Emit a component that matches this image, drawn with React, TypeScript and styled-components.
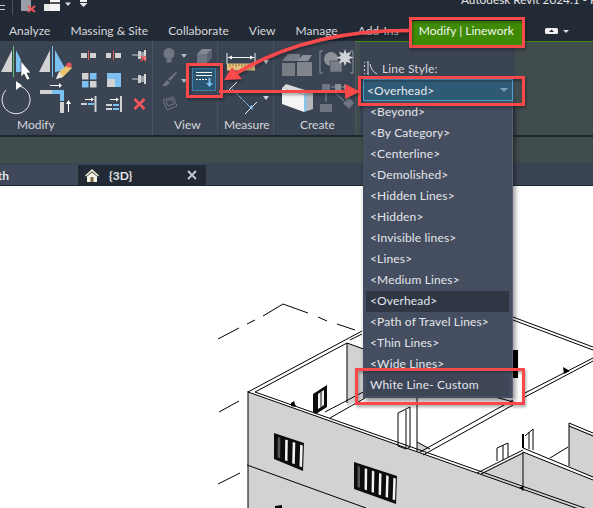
import React from 'react'
import styled, { createGlobalStyle } from 'styled-components'

const GlobalStyle = createGlobalStyle`
    html, body {
        margin: 0;
        padding: 0;
        background: #fff;
    }
    body {
        font-family: Lato, "Open Sans", "Liberation Sans", sans-serif;
    }
`

const Root = styled.div`
    position: relative;
    width: 593px;
    height: 508px;
    overflow: hidden;
    display: flex;
    flex-direction: column;
    background: #fff;
`

const TitleBar = styled.div`
    position: relative;
    height: 21px;
    flex: none;
    background: #222a35;
    overflow: hidden;
`

const Title = styled.div`
    margin: -9px 0 0 461px;
    font-size: 11.8px;
    line-height: 17px;
    color: #e4e6e9;
    white-space: nowrap;
`

const QuickAccess = styled.svg`
    position: absolute;
    left: 0;
    top: 0;
`

const TabStrip = styled.div`
    height: 20px;
    flex: none;
    display: flex;
    background: #222a35;
    position: relative;
    z-index: 2;
`

const Tab = styled.div<{ $active?: boolean }>`
    flex: none;
    font-size: 12px;
    line-height: 20px;
    padding: 0 ${p => (p.$active ? '8px' : '10px')};
    margin-left: ${p => (p.$active ? '2px' : '0')};
    height: ${p => (p.$active ? '25px' : '20px')};
    background: ${p => (p.$active ? '#3f8a05' : 'transparent')};
    color: ${p => (p.$active ? '#f2f6ee' : '#d5d8dc')};
    white-space: nowrap;
    &:first-child {
        margin-left: -1px;
    }
`

const TabIcons = styled.svg`
    margin-left: 23px;
    margin-top: 6px;
`

const Ribbon = styled.div`
    height: 94px;
    flex: none;
    display: flex;
    background: #3b4453;
    border-bottom: 2px solid #20262e;
`

const Panel = styled.div<{ $width: number; $labelLeft: number }>`
    width: ${p => p.$width}px;
    flex: none;
    box-sizing: border-box;
    border-right: 1px solid #4a5362;
    display: flex;
    flex-direction: column;
    color: #d5d8dc;
    font-size: 12px;
    line-height: 20px;
    & > span {
        padding-left: ${p => p.$labelLeft}px;
        margin-top: -1px;
    }
`

const PanelArt = styled.svg`
    display: block;
    flex: none;
`

const ContextArea = styled.div`
    flex: 1;
    display: flex;
    background: #414c4c;
    border-top: 2px solid #3f8a05;
    margin-top: -1px;
    padding-left: 4px;
`

const LineStylePanel = styled.div`
    width: 155px;
    box-sizing: border-box;
    background: #3b4453;
    padding: 18px 0 0 3px;
    display: flex;
    flex-direction: column;
`

const StyleLabel = styled.div`
    display: flex;
    align-items: center;
    gap: 4px;
    height: 16px;
    font-size: 12px;
    letter-spacing: 0.15px;
    color: #d5d8dc;
`

const DropDown = styled.div`
    position: relative;
    margin-top: 3px;
    width: 150px;
`

const Combo = styled.div`
    box-sizing: border-box;
    height: 22px;
    background: #2f5a75;
    border: 1px solid #4aa6d5;
    display: flex;
    align-items: center;
    justify-content: space-between;
    padding: 0 4px 0 3px;
    font-size: 12px;
    letter-spacing: 0.15px;
    color: #e8ebee;
`

const ComboCaret = styled.i`
    width: 0;
    height: 0;
    border-left: 4px solid transparent;
    border-right: 4px solid transparent;
    border-top: 4px solid #7f9db1;
`

const List = styled.div`
    position: absolute;
    top: 100%;
    left: 0;
    width: 100%;
    box-sizing: border-box;
    padding: 1px 3px 2px;
    background: #454e60;
    border-right: 1px solid #5a6373;
    box-shadow: 2px 3px 5px rgba(0, 0, 0, 0.45);
    z-index: 3;
`

const ListItem = styled.div<{ $selected?: boolean }>`
    height: 21px;
    line-height: 20px;
    padding-left: 4px;
    font-size: 12px;
    letter-spacing: 0.15px;
    white-space: nowrap;
    color: #e4e6ea;
    background: ${p => (p.$selected ? '#2f3745' : 'transparent')};
`

const CustomItem = styled(ListItem)`
    background: #3d4557;
    padding-left: 4px;
`

const Band = styled.div`
    height: 26px;
    flex: none;
    background: #414c4c;
`

const DocTabs = styled.div`
    height: 20px;
    padding-top: 2px;
    flex: none;
    display: flex;
    background: #3a4353;
    border-bottom: 1px solid #20262e;
`

const DocTab = styled.div<{ $active?: boolean }>`
    flex: none;
    width: ${p => (p.$active ? '128px' : '78px')};
    box-sizing: border-box;
    display: flex;
    align-items: center;
    justify-content: ${p => (p.$active ? 'flex-start' : 'flex-end')};
    gap: 9px;
    padding: ${p => (p.$active ? '0 9px 0 6px' : '0')};
    background: ${p => (p.$active ? '#222a35' : '#3f485b')};
    color: #e3e5e8;
    font-size: 12px;
    font-weight: 700;
    & > em {
        font-style: normal;
        flex: 1;
    }
`

const ThTab = styled.span`
    margin-right: 69px;
`

const Canvas = styled.div`
    flex: 1;
    background: #fff;
`

const Model = styled.svg`
    display: block;
`

const Annotations = styled.svg`
    position: absolute;
    left: 0;
    top: 0;
    z-index: 5;
    pointer-events: none;
`

const BLUE = '#7cc0f2'
const GREY = '#d2d2d2'
const DIM = '#6f7681'
const RED = '#f9484c'

// panel drawings use page coordinates through their viewBox
const Art: React.FC<{ x: number; w: number; children: React.ReactNode }> = ({ x, w, children }) => (
    <PanelArt width={w} height={75} viewBox={`${x} 41 ${w} 75`}>{children}</PanelArt>
)

const Caret: React.FC<{ x: number; y: number; fill?: string }> = ({ x, y, fill = '#d8dbe0' }) => (
    <polygon points={`${x - 3},${y - 2} ${x + 3},${y - 2} ${x},${y + 2}`} fill={fill} />
)

const Pin: React.FC<{ y: number }> = ({ y }) => (
    <g>
        <path d={`M132 ${y + 6}h6`} stroke="#c9ccd0" strokeWidth="1" />
        <rect x="138" y={y + 2} width="3" height="8" fill="#c9ccd0" />
        <rect x="141" y={y + 3} width="3" height="6" fill="#9a9ea6" />
        <rect x="144" y={y + 1} width="2" height="10" fill="#d8d8d8" />
    </g>
)

const ModifyArt = () => (
    <Art x={0} w={153}>
        <polygon points="1,72 12,50 12,72" fill={GREY} />
        <path d="M13.5 46v31" stroke="#62c47a" strokeWidth="1" />
        <polygon points="16,50 21,60 21,72 16,72" fill={BLUE} />
        <path d="M21 61v16l3-3 3 6 3-1-3-6h4z" fill="#fff" stroke="#20262e" strokeWidth="0.6" />
        <polygon points="39,72 50,50 50,72" fill={GREY} />
        <path d="M52.5 46v31" stroke={BLUE} strokeWidth="1" />
        <polygon points="55,50 66,70 55,72" fill={BLUE} />
        <path d="M56 79l3-7 9-8 4 4-9 9z" fill="#e9c46c" />
        <circle cx="69" cy="65" r="2.6" fill="#e8505a" />
        <path d="M56 79l3-7 4 5z" fill="#e8e8e8" />

        <path d="M19 86A14 14 0 1 1 6 90" fill="none" stroke="#e8e8e8" strokeWidth="1" />
        <polygon points="16,81 22,85.5 16,90" fill="#fff" />
        <rect x="40" y="90" width="12" height="4" fill={GREY} />
        <path d="M52 90h12v11h-4v-7h-8z" fill={BLUE} />
        <rect x="60" y="102" width="4" height="11" fill={GREY} />
        <path d="M50 85.5h9" stroke="#fff" strokeWidth="1" />
        <polygon points="59,83 62,85.5 59,88" fill="#fff" />
        <path d="M68.5 112v-8" stroke="#fff" strokeWidth="1" />
        <polygon points="66,104 68.5,100 71,104" fill="#fff" />

        <rect x="81" y="53" width="6" height="5" fill={GREY} />
        <rect x="90" y="53" width="6" height="5" fill={GREY} />
        <path d="M88.5 50.5v9.5" stroke="#e05a5a" strokeWidth="1" />
        <rect x="106" y="53" width="5" height="5" fill={GREY} />
        <rect x="115" y="53" width="6" height="5" fill={GREY} />
        <path d="M113.5 50.5v9.5" stroke="#e05a5a" strokeWidth="1" />
        <Pin y={49} />
        <path d="M141 56l5 5m0-5l-5 5" stroke="#f05050" strokeWidth="1.6" />

        <rect x="82" y="73" width="6.5" height="6.5" fill={GREY} />
        <rect x="90" y="73" width="6.5" height="6.5" fill={BLUE} />
        <rect x="82" y="81" width="6.5" height="6.5" fill={BLUE} />
        <rect x="90" y="81" width="6.5" height="6.5" fill={GREY} />
        <rect x="107" y="73" width="14" height="14" fill={BLUE} />
        <rect x="107" y="79" width="8" height="8" fill={GREY} />
        <Pin y={73} />

        <rect x="94.5" y="96" width="2" height="16" fill={GREY} />
        <rect x="81" y="103" width="6" height="2" fill={GREY} />
        <rect x="88" y="103" width="6" height="2" fill={BLUE} />
        <path d="M85 99.5h6" stroke="#fff" />
        <polygon points="91,97.5 94,99.5 91,101.5" fill="#fff" />
        <rect x="120" y="96" width="2" height="16" fill={GREY} />
        <rect x="106" y="104" width="6" height="2" fill={GREY} />
        <rect x="106" y="108" width="6" height="2" fill={GREY} />
        <rect x="113" y="104" width="6" height="2" fill={BLUE} />
        <rect x="113" y="108" width="6" height="2" fill={BLUE} />
        <path d="M110 99.5h6" stroke="#fff" />
        <polygon points="116,97.5 119,99.5 116,101.5" fill="#fff" />
        <path d="M134.5 99l10 10m0-10l-10 10" stroke="#f4555a" strokeWidth="2.6" />
    </Art>
)

const ViewArt = () => (
    <Art x={153} w={65}>
        <circle cx="169" cy="53.5" r="5.5" fill={DIM} />
        <rect x="166.5" y="59" width="5" height="3.5" fill={DIM} />
        <Caret x={184} y={56} fill="#aeb3ba" />
        <polygon points="197,54 207,54 207,63 197,63" fill={DIM} />
        <polygon points="197,54 202,49 212,49 207,54" fill="#858b95" />
        <polygon points="207,54 212,49 212,58 207,63" fill="#5b626d" />
        <path d="M162 86l5-6 3 3-4 3zM168 79l8-7 1 1-7 8z" fill={DIM} />
        <Caret x={184} y={81} fill="#aeb3ba" />
        <path d="M163 100l10-3 4 9-10 4zM166 101l6-2 2 5-6 2z" fill="none" stroke={DIM} strokeWidth="1" />
        <rect x="192.5" y="68.5" width="23" height="22" fill="#2b5570" stroke="#3d84ab" />
        <path d="M196 72.5h16M196 75.5h16" stroke="#f0f2f4" strokeWidth="1" />
        <path d="M196 79.5h11" stroke="#f0f2f4" strokeWidth="1" strokeDasharray="2 1" />
        <path d="M209.5 78v6" stroke={BLUE} strokeWidth="2" />
        <polygon points="206,83 213,83 209.5,87" fill={BLUE} />
    </Art>
)

const MeasureArt = () => (
    <Art x={218} w={56}>
        <path d="M227 53v11M255 53v11M228 57.5h26" stroke="#f0f2f4" strokeWidth="1" />
        <polygon points="228,57.5 232,55.5 232,59.5" fill="#f0f2f4" />
        <polygon points="254,57.5 250,55.5 250,59.5" fill="#f0f2f4" />
        <rect x="227" y="63.5" width="28" height="7" fill="#e6c27c" />
        <path d="M230 64v3M233 64v2M236 64v3M239 64v2M242 64v3M245 64v2M248 64v3M251 64v2" stroke="#8d7644" strokeWidth="1" />
        <Caret x={266} y={62} />
        <path d="M229 90l8-8M245 114l12-12" stroke="#f0f2f4" strokeWidth="1" />
        <path d="M232 89l19 19" stroke={BLUE} strokeWidth="1" strokeDasharray="4 1" />
        <polygon points="249,107 253,110 252,105" fill={BLUE} />
        <Caret x={266} y={98} />
    </Art>
)

const CreateArt = () => (
    <Art x={274} w={82}>
        <polygon points="282,63 295,63 295,76 282,76" fill="#777c85" />
        <polygon points="297,62 306,62 312,62 312,76 297,76" fill="#7f848d" />
        <polygon points="282,61 288,54 300,54 300,61" fill="#777c85" />
        <polygon points="297,61 303,55 312,55 308,61" fill="#8c919a" />
        <polygon points="286,84 311,92 304,95 282,88" fill="#d9dadc" />
        <polygon points="282,88 304,95 304,112 282,104" fill="#f4f4f4" />
        <polygon points="304,95 307,93 307,111 304,112" fill="#8ec3e8" />
        <polygon points="307,93 313,92 313,109 307,111" fill="#b4b6b9" />
        <path d="M323 51h-3v22h3M350 51h3v22h-3" fill="none" stroke="#8d929a" strokeWidth="1" />
        <circle cx="331" cy="59" r="7" fill="#8d929a" />
        <rect x="330" y="61" width="12" height="11" fill="#797e87" stroke="#4b525e" strokeWidth="0.8" />
        <path d="M345 49l1.6 4.5 4.5-2-2 4.5 4.5 1.6-4.5 1.6 2 4.5-4.5-2-1.6 4.5-1.6-4.5-4.5 2 2-4.5-4.5-1.6 4.5-1.6-2-4.5 4.5 2z" fill="#cfd2d6" />
        <rect x="322" y="84" width="8" height="7" fill={DIM} />
        <rect x="320" y="104" width="12" height="8" fill={DIM} />
        <polygon points="343,103 349,97 354,103 349,109" fill={DIM} />
        <rect x="335" y="84" width="6" height="6" fill="#8d929a" />
        <path d="M331 87h13M326 92v10M332 90l12 11" stroke="#8d929a" strokeWidth="1" />
        <polygon points="344,84 348,87 344,90" fill="#8d929a" />
    </Art>
)

const pts = (list: number[][]) => list.map(p => p.join(',')).join(' ')

// a black framed window in a wall, given its corners, with glass stripes across it
const WallWindow: React.FC<{ tl: number[]; tr: number[]; br: number[]; bl: number[]; panes: number }> = ({ tl, tr, br, bl, panes }) => {
    const at = (a: number[], b: number[], t: number) => [a[0] + (b[0] - a[0]) * t, a[1] + (b[1] - a[1]) * t]
    const stripes = []
    for (let i = 0; i < panes; i++) {
        const s = (i + 0.5) / panes
        const e = (i + 0.85) / panes
        stripes.push(
            <polygon
                key={i}
                points={pts([
                    at(at(tl, tr, s), at(bl, br, s), 0.1),
                    at(at(tl, tr, e), at(bl, br, e), 0.1),
                    at(at(tl, tr, e), at(bl, br, e), 0.88),
                    at(at(tl, tr, s), at(bl, br, s), 0.88),
                ])}
                fill={i === 0 ? '#555' : '#f2f2f2'}
            />,
        )
    }
    return (
        <g>
            <polygon points={pts([tl, tr, br, bl])} fill="#0c0c0c" />
            {stripes}
        </g>
    )
}

const Building = () => (
    <Model width={593} height={322} viewBox="0 186 593 322">
        <g fill={GREY}>
            <polygon points="248,392 593,514 248,514" />
            <polygon points="347,343 370,351 370,395 347,406" />
            <polygon points="417,442 430,449 422,453 417,451" />
            <polygon points="478,474 523,452 523,491" />
            <polygon points="523,452 593,480 593,514 523,491" />
            <polygon points="569,425 593,435 593,478 569,467" />
        </g>
        <g fill="none" stroke="#000" strokeWidth="1">
            <path d="M283 304l-20 12M255 320l-8 4M239 328l-21 11M283 304l25 9M318 317l9 4M337 324l18 6" />
            <path d="M219 412l20-11M218 484l22-11" />
            <path d="M248 392L362 331M255 392L347 343M350 340L362 334" />
            <path d="M248 391V508M248 392L593 514M255 392L593 511" />
            <path d="M347 343V403M347 343l22 8" />
            <path d="M247 465L366 508" />
            <path d="M417 397V452M417 442l13 7" />
            <path d="M325 412l40-21M330 418l35-20" />
            <path d="M420 452L513 400M423 455L513 405M525 393L593 358M525 397L593 361" />
            <path d="M513 317L593 347M513 320L593 350" />
            <path d="M495 397l22 6" />
            <path d="M477 473l46-23M481 474l42-21" />
            <path d="M523 448L593 477M523 452L593 480M523 452V491" />
            <path d="M550 458l18-11" />
            <path d="M569 423L593 433M569 426L593 436M569 423V466" />
            <path d="M497 448v13M497 448l11-5v14M503 445v15" />
            <path d="M525 436l8-7v21M529 432v17" />
            <path d="M398 413l12-6v40l-4 2-8-3zM406 410v37" />
        </g>
        <rect x="522" y="434" width="2" height="14" fill="#000" />
        <polygon points="313,394 327,385 327,407 316,414 313,412" fill="#0c0c0c" />
        <polygon points="318,394 324,390 324,405 318,409" fill="#f2f2f2" />
        <path d="M321 392v15" stroke="#111" strokeWidth="1" />
        <polygon points="291,403 294,401 296,407 291,406" fill="#000" />
        <polygon points="563,367 570,371 564,374" fill="#000" />
        <polygon points="519,488 523,486 523,490" fill="#000" />
        <rect x="513" y="350" width="5" height="28" fill="#000" />
        <polygon points="275,506 282,505 282,508 275,508" fill="#000" />
        <WallWindow tl={[274, 433]} tr={[304, 443]} br={[303, 471]} bl={[274, 459]} panes={4} />
        <WallWindow tl={[354, 462]} tr={[397, 476]} br={[396, 504]} bl={[354, 489]} panes={6} />
    </Model>
)

const Marks = () => (
    <Annotations width={593} height={508} viewBox="0 0 593 508">
        <defs>
            <filter id="soft" x="-20%" y="-20%" width="140%" height="150%">
                <feDropShadow dx="1" dy="2" stdDeviation="1.5" floodColor="#000" floodOpacity="0.35" />
            </filter>
        </defs>
        <g fill="none" stroke={RED} strokeWidth="3" filter="url(#soft)">
            <rect x="187.5" y="64.5" width="34" height="32" />
            <rect x="410.5" y="18.5" width="113" height="28" />
            <rect x="359.5" y="77.5" width="164" height="27" />
            <rect x="356.5" y="369.5" width="167" height="34" />
            <path d="M410 30.5C345 30 285 44 235 74" strokeWidth="3.5" />
            <path d="M219 91.5H346" />
        </g>
        <g fill={RED} filter="url(#soft)">
            <polygon points="224,80 232,67 242,79" />
            <polygon points="345,84 360,91.5 345,99" />
        </g>
    </Annotations>
)

const lineStyles = [
    '<Beyond>',
    '<By Category>',
    '<Centerline>',
    '<Demolished>',
    '<Hidden Lines>',
    '<Hidden>',
    '<Invisible lines>',
    '<Lines>',
    '<Medium Lines>',
    '<Overhead>',
    '<Path of Travel Lines>',
    '<Thin Lines>',
    '<Wide Lines>',
]

const tabs = ['Analyze', 'Massing & Site', 'Collaborate', 'View', 'Manage', 'Add-Ins']

const App: React.FC = () => (
    <Root>
        <GlobalStyle />
        <TitleBar>
            <Title>Autodesk Revit 2024.1 - P</Title>
            <QuickAccess width={100} height={21} viewBox="0 0 100 21">
                <path d="M0 5.5h5M0 9.5h5" stroke="#c8ccd2" strokeWidth="1" />
                <path d="M12.5 0v15" stroke="#4b5361" strokeWidth="1" />
                <rect x="21" y="0" width="10" height="11" fill="#9a9ea6" />
                <path d="M28 6l7 6m0-6l-7 6" stroke="#f0555a" strokeWidth="2" />
                <rect x="44" y="4" width="7" height="7" fill="#e8e8e8" />
                <rect x="50" y="0" width="10" height="11" fill="#f4f4f4" />
                <rect x="50" y="2" width="10" height="2" fill="#555" />
                <polygon points="65,2.5 71,2.5 68,6" fill="#d8dbe0" />
                <rect x="80" y="0" width="7" height="2" fill="#f0f0f0" />
                <polygon points="79.5,3 87.5,3 83.5,7" fill="#f0f0f0" />
            </QuickAccess>
        </TitleBar>
        <TabStrip>
            {tabs.map(t => <Tab key={t}>{t}</Tab>)}
            <Tab $active>Modify | Linework</Tab>
            <TabIcons width={26} height={8} viewBox="0 0 26 8">
                <rect x="0" y="1" width="13" height="6" rx="1.5" fill="#f0f0f0" />
                <polygon points="4,5 6.5,2.5 9,5" fill="#222a35" />
                <polygon points="18,3 24,3 21,6" fill="#d8dbe0" />
            </TabIcons>
        </TabStrip>
        <Ribbon>
            <Panel $width={153} $labelLeft={17}>
                <ModifyArt />
                <span>Modify</span>
            </Panel>
            <Panel $width={65} $labelLeft={21}>
                <ViewArt />
                <span>View</span>
            </Panel>
            <Panel $width={56} $labelLeft={6}>
                <MeasureArt />
                <span>Measure</span>
            </Panel>
            <Panel $width={82} $labelLeft={26}>
                <CreateArt />
                <span>Create</span>
            </Panel>
            <ContextArea>
                <LineStylePanel>
                    <StyleLabel>
                        <svg width="15" height="14" viewBox="0 0 15 14">
                            <path d="M1.5 1v1M1.5 4v2M1.5 8v2M1.5 12v1" stroke="#d5d8dc" strokeWidth="1" fill="none" />
                            <path d="M4 1h2M5 1v12M4 13h2" stroke="#d5d8dc" strokeWidth="1" fill="none" />
                            <path d="M7 3c1 5 3 8 7 10" stroke="#d5d8dc" strokeWidth="1" fill="none" />
                        </svg>
                        Line Style:
                    </StyleLabel>
                    <DropDown>
                        <Combo>
                            {'<Overhead>'}
                            <ComboCaret />
                        </Combo>
                        <List>
                            {lineStyles.map(s => (
                                <ListItem key={s} $selected={s === '<Overhead>'}>{s}</ListItem>
                            ))}
                            <CustomItem>White Line- Custom</CustomItem>
                        </List>
                    </DropDown>
                </LineStylePanel>
            </ContextArea>
        </Ribbon>
        <Band />
        <DocTabs>
            <DocTab><ThTab>th</ThTab></DocTab>
            <DocTab $active>
                <svg width="16" height="15" viewBox="0 0 16 15">
                    <path d="M8 1L1 7.5l1.2 1L8 3.5l5.8 5 1.2-1z" fill="#e9e3d0" />
                    <path d="M3 8.5L8 4.5l5 4V14H3z" fill="#f6f2e6" />
                    <rect x="6.5" y="9" width="3" height="5" fill="#7a6a4a" />
                </svg>
                <em>{'{3D}'}</em>
                <svg width="10" height="10" viewBox="0 0 10 10">
                    <path d="M1 1l8 8m0-8l-8 8" stroke="#c8ccd2" strokeWidth="1.8" />
                </svg>
            </DocTab>
        </DocTabs>
        <Canvas>
            <Building />
        </Canvas>
        <Marks />
    </Root>
)

export default App
